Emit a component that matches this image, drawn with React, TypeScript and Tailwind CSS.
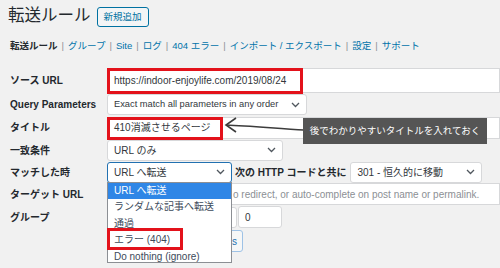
import React from "react";

const Chevron = () => (
  <svg width="9" height="6" viewBox="0 0 9 6" className="shrink-0">
    <path d="M1 1l3.5 3.5L8 1" fill="none" stroke="#50575e" strokeWidth="1.3" />
  </svg>
);

const Select = ({
  text,
  className = "",
}: {
  text: string;
  className?: string;
}) => (
  <div
    className={`flex items-center justify-between bg-white border border-[#d7d8da] rounded-[3px] pl-[6px] pr-[6px] text-[#32373c] ${className}`}
  >
    <span className="whitespace-nowrap">{text}</span>
    <Chevron />
  </div>
);

const Label = ({ children }: { children: React.ReactNode }) => (
  <div className="w-[107px] shrink-0 pl-[10px] font-bold text-[#23282d] whitespace-nowrap">
    {children}
  </div>
);

const navItems = [
  "グループ",
  "Site",
  "ログ",
  "404 エラー",
  "インポート / エクスポート",
  "設定",
  "サポート",
];

export default function App() {
  return (
    <div className="relative w-[500px] h-[268px] overflow-hidden bg-[#f1f1f1] text-[10px] text-[#23282d] font-['Liberation_Sans','Noto_Sans_CJK_JP',sans-serif]">
      {/* header */}
      <div className="flex items-start pl-[8px] pt-[4px] h-[30px]">
        <h1 className="text-[16.5px] leading-[22px] text-[#23282d]">転送ルール</h1>
        <button className="ml-[6px] mt-[3px] h-[20px] px-[6px] border border-[#0071a1] rounded-[3px] bg-[#f3f5f6] text-[#0071a1] text-[9.5px] leading-none">
          新規追加
        </button>
      </div>

      {/* sub nav */}
      <div className="mt-[8px] pl-[10px] h-[16px] leading-[16px] text-[9.5px] whitespace-nowrap">
        <span className="font-bold text-[#23282d]">転送ルール</span>
        {navItems.map((n) => (
          <span key={n}>
            <span className="text-[#8c8f94] mx-[4px]">|</span>
            <span className="text-[#0073aa]">{n}</span>
          </span>
        ))}
      </div>

      {/* form */}
      <div className="mt-[14px] flex flex-col">
        <div className="flex items-center h-[25px]">
          <Label>ソース URL</Label>
          <div className="relative flex-1 h-[25px] bg-white border border-[#d7d8da] flex items-center pl-[6px] text-[#32373c] whitespace-nowrap">
            https://indoor-enjoylife.com/2019/08/24
            <div className="absolute left-[-1px] top-[-1px] w-[196px] h-[26px] border-[3px] border-[#e3121b]" />
          </div>
        </div>

        <div className="flex items-center h-[23px]">
          <Label>Query Parameters</Label>
          <Select
            text="Exact match all parameters in any order"
            className="w-[200px] h-[21px] text-[9.3px]"
          />
        </div>

        <div className="flex items-center h-[23px]">
          <Label>タイトル</Label>
          <div className="relative flex-1 h-[22px] bg-white border border-[#d7d8da] flex items-center pl-[6px] text-[#32373c] whitespace-nowrap">
            410消滅させるページ
            <div className="absolute left-[-1px] top-[-1px] w-[116px] h-[23px] border-[3px] border-[#e3121b]" />
          </div>
        </div>

        <div className="flex items-center h-[22px]">
          <Label>一致条件</Label>
          <Select text="URL のみ" className="w-[176px] h-[21px]" />
        </div>

        <div className="flex items-center h-[22px]">
          <Label>マッチした時</Label>
          <div className="flex items-center justify-between w-[125px] h-[21px] bg-white border border-[#2271b1] rounded-[3px] px-[6px] text-[#32373c]">
            <span>URL へ転送</span>
            <Chevron />
          </div>
          <span className="ml-[3px] font-bold whitespace-nowrap">
            次の HTTP コードと共に
          </span>
          <Select text="301 - 恒久的に移動" className="ml-[4px] w-[132px] h-[21px]" />
        </div>

        <div className="flex items-center h-[22px]">
          <Label>ターゲット URL</Label>
          <div className="flex-1 h-[22px] bg-white border border-[#d7d8da] flex items-center pl-[125px] text-[#8c8f94] whitespace-nowrap overflow-hidden">
            o redirect, or auto-complete on post name or permalink.
          </div>
        </div>

        <div className="flex items-center h-[24px]">
          <Label>グループ</Label>
          <div className="w-[130px] h-[21px] bg-white border border-[#d7d8da] rounded-[3px]" />
          <div className="ml-[1px] w-[44px] h-[22px] bg-white border border-[#d7d8da] rounded-[3px] flex items-center pl-[6px] text-[#32373c]">
            0
          </div>
        </div>

        <div className="flex items-center h-[24px]">
          <div className="w-[190px] shrink-0" />
          <button className="w-[53px] h-[22px] pr-[5px] border border-[#9ec2e6] rounded-[3px] bg-[#f6f7f7] text-[#2271b1] text-[10px] text-right">
            Options
          </button>
        </div>
      </div>

      {/* open dropdown */}
      <div className="absolute left-[107px] top-[182px] w-[125px] h-[81px] bg-white border border-[#8c8f94] text-[10px] text-[#3c4a5a]">
        <div className="h-[16px] leading-[16px] pl-[6px] bg-[#2f86e6] text-white">URL へ転送</div>
        <div className="h-[16.5px] leading-[16.5px] pl-[6px]">ランダムな記事へ転送</div>
        <div className="h-[16.5px] leading-[16.5px] pl-[6px]">通過</div>
        <div className="relative h-[16.5px] leading-[16.5px] pl-[6px]">
          エラー (404)
          <div className="absolute left-[-1px] top-[-4px] w-[76px] h-[22px] border-[3px] border-[#e3121b]" />
        </div>
        <div className="h-[16.5px] leading-[16.5px] pl-[6px]">Do nothing (ignore)</div>
      </div>

      {/* annotation arrow */}
      <svg
        className="absolute left-[222px] top-[114px]"
        width="84"
        height="24"
        viewBox="0 0 84 24"
      >
        <path d="M4 11 C 30 12, 60 15, 82 16" fill="none" stroke="#3c3c3c" strokeWidth="1.6" />
        <path d="M14 4 L4 11 L14 18" fill="none" stroke="#3c3c3c" strokeWidth="1.6" />
      </svg>

      {/* tooltip */}
      <div className="absolute left-[303px] top-[118px] w-[184px] h-[26px] bg-[#555555] text-white text-[9.5px] flex items-center justify-center whitespace-nowrap">
        後でわかりやすいタイトルを入れておく
      </div>
    </div>
  );
}
